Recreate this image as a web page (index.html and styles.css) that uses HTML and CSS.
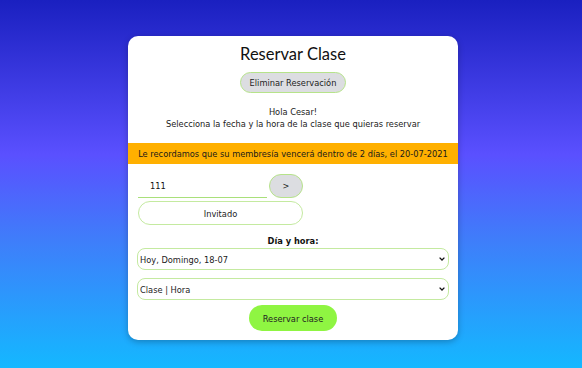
FILE: index.html
```html
<!DOCTYPE html>
<html lang="es">
  <head>
    <meta charset="UTF-8" />
    <meta name="viewport" content="width=device-width, initial-scale=1.0" />
    <title>Reservar Clase</title>
    <link rel="stylesheet" href="styles.css">
  </head>
  <body>
    <div class="card">
      <h1>Reservar Clase</h1>
      <button class="delete-btn">Eliminar Reservación</button>
      <p class="greeting">
        Hola Cesar!<br />
        Selecciona la fecha y la hora de la clase que quieras reservar
      </p>
      <div class="notice">
        Le recordamos que su membresía vencerá dentro de 2 días, el 20-07-2021
      </div>

      <div class="guest-section">
        <div class="guest-row">
          <input type="text" class="guest-input" value="111" />
          <button class="go-btn">&gt;</button>
        </div>
        <button class="guest-btn">Invitado</button>
      </div>

      <div class="date-section">
        <label class="date-label">Día y hora:</label>
        <div class="select-wrap">
          <select class="select-box">
            <option>Hoy, Domingo, 18-07</option>
          </select>
          <svg class="chevron" viewBox="0 0 6 4" width="6" height="4"><path d="M0.6 0.6 L3 3 L5.4 0.6" fill="none" stroke="#111" stroke-width="1.3"/></svg>
        </div>
        <div class="select-wrap last">
          <select class="select-box">
            <option>Clase | Hora</option>
          </select>
          <svg class="chevron" viewBox="0 0 6 4" width="6" height="4"><path d="M0.6 0.6 L3 3 L5.4 0.6" fill="none" stroke="#111" stroke-width="1.3"/></svg>
        </div>
        <button class="reserve-btn">Reservar clase</button>
      </div>
    </div>
  </body>
</html>
```

FILE: styles.css
```css
html {
  height: 100%;
}
body {
  font-family: "DejaVu Sans Condensed", "DejaVu Sans", Tahoma, sans-serif;
  font-stretch: condensed;
  margin: 0;
  padding: 36px 0 0 4px;
  min-height: 100vh;
  box-sizing: border-box;
  background: linear-gradient(#1a20c0 0%, #5a50ff 42%, #3f7dfa 65%, #14b8ff 100%);
}
.card {
  width: 330px;
  margin: 0 auto;
  background-color: white;
  border-radius: 10px;
  box-shadow: 0 2px 6px rgba(0, 0, 0, 0.25);
  padding: 7px 0 9px 0;
  display: flex;
  flex-direction: column;
  align-items: center;
}
.card h1 {
  font-family: Lato, "Open Sans", sans-serif;
  font-stretch: normal;
  font-weight: 400;
  font-size: 16.5px;
  line-height: 22px;
  margin: 0 0 7px 0;
  color: #111;
}
button,
input,
select {
  font-family: "DejaVu Sans Condensed", "DejaVu Sans", Tahoma, sans-serif;
  font-stretch: condensed;
}
button {
  cursor: pointer;
}
.delete-btn {
  background-color: #dcdde1;
  border: 1px solid #b6e38a;
  border-radius: 20px;
  width: 106px;
  height: 21px;
  padding: 0;
  font-size: 9.2px;
  color: #222;
}
.greeting {
  font-size: 9.2px;
  line-height: 12px;
  text-align: center;
  color: #1a1a1a;
  margin: 13px 0 13px 0;
}
.notice {
  align-self: stretch;
  background-color: #ffb000;
  height: 21px;
  line-height: 21px;
  font-size: 9.2px;
  text-align: center;
  color: #1a1a1a;
}
.guest-section {
  align-self: stretch;
  padding: 10px 10px 0 10px;
  display: flex;
  flex-direction: column;
  gap: 3px;
}
.guest-row {
  display: flex;
  align-items: center;
  gap: 2px;
}
.guest-input {
  width: 129px;
  height: 24px;
  box-sizing: border-box;
  border: none;
  border-bottom: 1px solid #a9e07a;
  padding: 0 0 0 12px;
  font-size: 9.2px;
  color: #111;
  outline: none;
}
.go-btn {
  width: 34px;
  height: 24px;
  background-color: #dcdde1;
  border: 1px solid #b6e38a;
  border-radius: 12px;
  font-size: 9px;
  color: #222;
}
.guest-btn {
  width: 165px;
  height: 24px;
  background-color: white;
  border: 1px solid #c4eaa0;
  border-radius: 12px;
  font-size: 9.2px;
  color: #222;
}
.date-section {
  align-self: stretch;
  padding: 10px 9px 0 9px;
  display: flex;
  flex-direction: column;
  align-items: center;
}
.date-label {
  font-weight: bold;
  font-size: 9.2px;
  line-height: 12px;
  margin-bottom: 1px;
  color: #111;
}
.select-wrap {
  position: relative;
  align-self: stretch;
  margin-bottom: 8px;
}
.select-wrap.last {
  margin-bottom: 5px;
}
.select-box {
  appearance: none;
  -webkit-appearance: none;
  display: block;
  width: 100%;
  height: 22px;
  border: 1px solid #c4eaa0;
  border-radius: 8px;
  background-color: white;
  font-size: 9.2px;
  color: #222;
  padding: 0 2px;
  outline: none;
}
.chevron {
  position: absolute;
  right: 4px;
  top: 9px;
  pointer-events: none;
}
.reserve-btn {
  background-color: #8ff542;
  border: none;
  border-radius: 14px;
  width: 88px;
  height: 26px;
  font-size: 9.2px;
  color: #222;
}
```
